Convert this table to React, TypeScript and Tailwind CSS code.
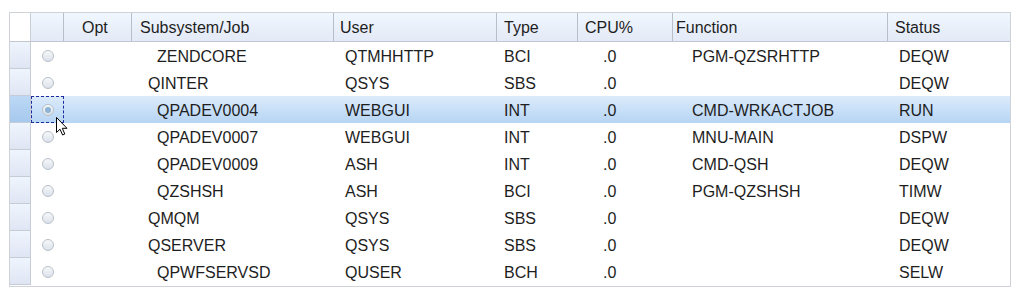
import React from 'react';

interface JobRow {
  name: string;
  indent: 1 | 2;
  user: string;
  type: string;
  cpu: string;
  fn: string;
  status: string;
}

const rows: JobRow[] = [
  { name: 'ZENDCORE', indent: 2, user: 'QTMHHTTP', type: 'BCI', cpu: '.0', fn: 'PGM-QZSRHTTP', status: 'DEQW' },
  { name: 'QINTER', indent: 1, user: 'QSYS', type: 'SBS', cpu: '.0', fn: '', status: 'DEQW' },
  { name: 'QPADEV0004', indent: 2, user: 'WEBGUI', type: 'INT', cpu: '.0', fn: 'CMD-WRKACTJOB', status: 'RUN' },
  { name: 'QPADEV0007', indent: 2, user: 'WEBGUI', type: 'INT', cpu: '.0', fn: 'MNU-MAIN', status: 'DSPW' },
  { name: 'QPADEV0009', indent: 2, user: 'ASH', type: 'INT', cpu: '.0', fn: 'CMD-QSH', status: 'DEQW' },
  { name: 'QZSHSH', indent: 2, user: 'ASH', type: 'BCI', cpu: '.0', fn: 'PGM-QZSHSH', status: 'TIMW' },
  { name: 'QMQM', indent: 1, user: 'QSYS', type: 'SBS', cpu: '.0', fn: '', status: 'DEQW' },
  { name: 'QSERVER', indent: 1, user: 'QSYS', type: 'SBS', cpu: '.0', fn: '', status: 'DEQW' },
  { name: 'QPWFSERVSD', indent: 2, user: 'QUSER', type: 'BCH', cpu: '.0', fn: '', status: 'SELW' },
];

const SELECTED = 2;

const Radio: React.FC<{ checked?: boolean }> = ({ checked }) => (
  <div className="w-[12px] h-[12px] rounded-full border border-[#b9c0c9] bg-gradient-to-b from-[#f6f8fa] to-[#dbe2ea] flex items-center justify-center">
    {checked && <div className="w-[6px] h-[6px] rounded-full bg-[#8db2d4]" />}
  </div>
);

const Cursor = () => (
  <svg
    className="absolute left-[56px] top-[117px]"
    width="12"
    height="19"
    viewBox="0 0 12 19"
  >
    <path
      d="M0.5 0.5 L0.5 15.5 L4 12.2 L6.6 18 L8.8 17 L6.3 11.3 L11 11.3 Z"
      fill="#fff"
      stroke="#000"
      strokeWidth="1"
      strokeLinejoin="miter"
    />
  </svg>
);

const grid =
  'grid grid-cols-[21px_33px_68px_202px_163px_81px_95px_215px_1fr]';

const headCell =
  'bg-gradient-to-b from-[#f1f7fe] to-[#e3e9f6] border-r border-[#b9bfc9] flex items-center pt-[2px]';

export default function App() {
  return (
    <div className="relative w-[1022px] h-[294px] bg-white font-['Liberation_Sans',Arial,sans-serif] text-[16px] text-[#1e1e1e]">
      <div className="absolute left-[9px] top-[12px] w-[1002px] h-[275px] border border-[#cfd2d6] overflow-hidden">
        {/* Header */}
        <div className={`${grid} h-[29px] border-b border-[#c3c8d0]`}>
          <div className="bg-white border-r border-[#c9ced6]" />
          <div className={headCell} />
          <div className={`${headCell} pl-[18px]`}>Opt</div>
          <div className={`${headCell} pl-[8px]`}>Subsystem/Job</div>
          <div className={`${headCell} pl-[6px]`}>User</div>
          <div className={`${headCell} pl-[7px]`}>Type</div>
          <div className={`${headCell} pl-[7px]`}>CPU%</div>
          <div className={`${headCell} pl-[3px]`}>Function</div>
          <div className="bg-gradient-to-b from-[#f1f7fe] to-[#e3e9f6] flex items-center pt-[2px] pl-[7px]">Status</div>
        </div>

        {/* Rows */}
        {rows.map((r, i) => {
          const sel = i === SELECTED;
          return (
            <div
              key={r.name}
              className={`${grid} h-[27px] ${
                sel ? 'bg-gradient-to-b from-[#dcebfb] via-[#c9e0f8] to-[#b6d4f3]' : 'bg-white'
              }`}
            >
              <div
                className={`border-r border-b border-[#c6ccd6] ${
                  sel
                    ? 'bg-gradient-to-b from-[#bcd8f5] to-[#a6c9ee]'
                    : 'bg-gradient-to-b from-[#eff5fd] to-[#e0e5f4]'
                }`}
              />
              <div
                className={`flex items-center justify-center ${
                  sel ? 'border border-dashed border-[#1b2a9c]' : ''
                }`}
              >
                <Radio checked={sel} />
              </div>
              <div />
              <div className={`flex items-center pt-[3px] ${r.indent === 1 ? 'pl-[16px]' : 'pl-[25px]'}`}>
                {r.name}
              </div>
              <div className="flex items-center pt-[3px] pl-[11px]">{r.user}</div>
              <div className="flex items-center pt-[3px] pl-[7px]">{r.type}</div>
              <div className="flex items-center pt-[3px] pl-[25px]">{r.cpu}</div>
              <div className="flex items-center pt-[3px] pl-[19px]">{r.fn}</div>
              <div className="flex items-center pt-[3px] pl-[11px]">{r.status}</div>
            </div>
          );
        })}
      </div>
      <Cursor />
    </div>
  );
}
